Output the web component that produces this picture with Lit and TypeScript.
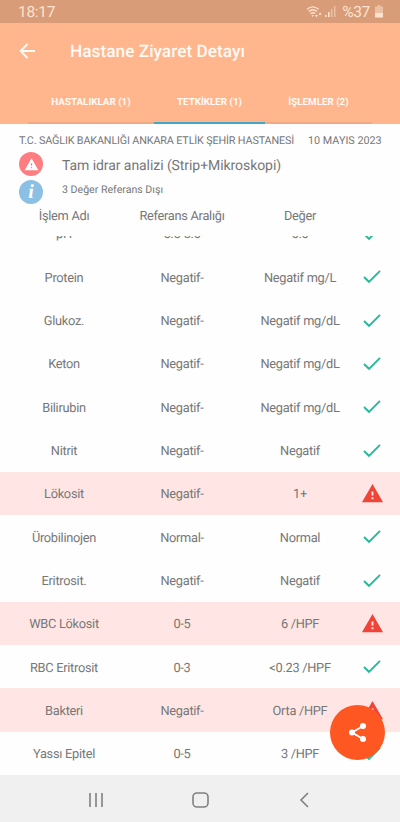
import {LitElement, html, css, svg} from 'lit';
import {customElement, property} from 'lit/decorators.js';
import {classMap} from 'lit/directives/class-map.js';

interface Result {
    name: string;
    range: string;
    value: string;
    alert?: boolean;
}

const RESULTS: Result[] = [
    {name: 'pH', range: '5.5-8.0', value: '6.0'},
    {name: 'Protein', range: 'Negatif-', value: 'Negatif mg/L'},
    {name: 'Glukoz.', range: 'Negatif-', value: 'Negatif mg/dL'},
    {name: 'Keton', range: 'Negatif-', value: 'Negatif mg/dL'},
    {name: 'Bilirubin', range: 'Negatif-', value: 'Negatif mg/dL'},
    {name: 'Nitrit', range: 'Negatif-', value: 'Negatif'},
    {name: 'Lökosit', range: 'Negatif-', value: '1+', alert: true},
    {name: 'Ürobilinojen', range: 'Normal-', value: 'Normal'},
    {name: 'Eritrosit.', range: 'Negatif-', value: 'Negatif'},
    {name: 'WBC Lökosit', range: '0-5', value: '6 /HPF', alert: true},
    {name: 'RBC Eritrosit', range: '0-3', value: '<0.23 /HPF'},
    {name: 'Bakteri', range: 'Negatif-', value: 'Orta /HPF', alert: true},
    {name: 'Yassı Epitel', range: '0-5', value: '3 /HPF'},
];

const warning = svg`<path fill-rule="evenodd" d="M1 21h22L12 2 1 21zm12-3h-2v-2h2v2zm0-4h-2v-4h2v4z"/>`;

@customElement('status-bar')
class StatusBar extends LitElement {
    static styles = css`
:host {
display: flex;
align-items: center;
height: 23px;
padding: 0 17px 0 18px;
background: #d89c78;
color: #ffe3d0;
font-size: 15.5px;
letter-spacing: -.3px;
}
.time {
flex: 1;
}
svg {
fill: currentColor;
}
.wifi {
margin-right: 2px;
}
.signal {
margin-right: 6px;
}
.battery {
margin-left: 5px;
}
`;

    render() {
	return html`
<span class="time">18:17</span>
<svg class="wifi" width="17" height="14" viewBox="0 0 17 14">
<g fill="none" stroke="currentColor" stroke-width="1.3">
<path d="M1 4.2Q6.8 -.6 12.6 4.2"/>
<path d="M2.8 6.5Q6.8 3 10.8 6.5"/>
<path d="M4.6 8.8Q6.8 6.8 9 8.8"/>
</g>
<path d="M5.4 10.2h2.6l-1.3 1.9zM9 10h3l-1.5 2.5zM12.6 9.7h3l-1.5-2.5z"/>
</svg>
<svg class="signal" width="11" height="13" viewBox="0 0 11 13">
<path d="M0 10h1.6v2H0zM3 7h1.6v5H3z"/>
<path opacity=".5" d="M6 4h1.5v8H6zM9 1h1.5v11H9z"/>
</svg>
<span>%37</span>
<svg class="battery" width="8" height="13" viewBox="0 0 8 13">
<path opacity=".5" d="M2.5 0h3v1.5H8V8H0V1.5h2.5z"/>
<path d="M0 8h8v4q0 .6-.6.6H.6Q0 12.600 0 12z"/>
</svg>`;
    }
}

@customElement('result-row')
class ResultRow extends LitElement {
    static styles = css`
.row {
display: grid;
grid-template-columns: repeat(3, 118px) 26px;
align-items: center;
height: 43.33px;
padding: 1px 0 0 5px;
box-sizing: border-box;
text-align: center;
}
.alert {
background: #ffe6e4;
}
span {
padding-top: 3px;
}
svg {
display: block;
margin: 0 auto;
}
.bad {
fill: #f04438;
}
.ok {
fill: none;
stroke: #26b99a;
stroke-width: 1.9;
}
`;

    @property({attribute: false}) result!: Result;

    render() {
	const {name, range, value, alert} = this.result;
	return html`
<div class=${classMap({row: true, alert: !!alert})}>
<span>${name}</span>
<span>${range}</span>
<span>${value}</span>
${alert
    ? html`<svg class="bad" width="23" height="23" viewBox="0 0 24 24">${warning}</svg>`
    : html`<svg class="ok" width="18" height="14" viewBox="0 0 18 14"><path d="M1 7 6 11.800 17 .800"/></svg>`}
</div>`;
    }
}

@customElement('app-root')
class AppRoot extends LitElement {
    static styles = css`
:host {
display: flex;
flex-direction: column;
position: relative;
height: 822px;
overflow: hidden;
background: #fefefe;
color: #777;
font: 12.8px/16px Roboto, sans-serif;
letter-spacing: -.28px;
text-rendering: geometricPrecision;
}
header {
flex: none;
height: 101px;
background: #ffb68d;
color: #fffaf5;
letter-spacing: 0;
}
.title {
display: flex;
align-items: center;
gap: 34px;
height: 56px;
padding-left: 19px;
font-size: 17.3px;
font-weight: 500;
}
.title span {
padding-top: 2px;
}
.tabs {
display: grid;
grid-template-columns: 126px 111px 107px;
height: 45px;
padding-left: 28px;
font-size: 9.8px;
font-weight: 700;
text-align: center;
}
.tab {
padding-top: 16px;
border-bottom: 2px solid #efaa84;
}
.tab.active {
border-color: #43a6c6;
}
.hospital {
display: flex;
gap: 14px;
padding: 9px 0 0 19px;
font-size: 10.8px;
letter-spacing: -.15px;
white-space: nowrap;
}
.date {
letter-spacing: 0;
}
.summary {
display: grid;
grid-template-columns: 24px 1fr;
column-gap: 19px;
row-gap: 4px;
align-items: center;
padding: 3px 0 0 19px;
letter-spacing: 0;
}
.badge {
display: flex;
align-items: center;
justify-content: center;
width: 24px;
height: 24px;
border-radius: 50%;
background: #ff7d80;
}
.badge svg {
fill: #fff;
}
.badge.info {
background: #8bbfe4;
color: #fff;
font: italic bold 20px/24px "Liberation Serif", serif;
}
.test {
padding-top: 4px;
font-size: 14px;
letter-spacing: -.07px;
}
.count {
font-size: 10.6px;
padding-bottom: 4px;
}
.head {
display: grid;
flex: none;
grid-template-columns: repeat(3, 118px);
padding: 5px 0 0 5px;
height: 32px;
box-sizing: border-box;
text-align: center;
}
.list {
display: flex;
flex: 1;
flex-direction: column;
justify-content: flex-end;
min-height: 0;
overflow: hidden;
}
.fab {
display: flex;
align-items: center;
justify-content: center;
position: absolute;
right: 15.500px;
bottom: 62px;
width: 55px;
height: 55px;
border-radius: 50%;
background: #ff5722;
}
nav {
display: flex;
flex: none;
justify-content: center;
gap: 88px;
height: 47px;
padding: 2px 0 0;
box-sizing: border-box;
align-items: center;
background: #f0f0f0;
}
nav svg {
fill: none;
stroke: #808080;
stroke-width: 1.6;
}
`;

    render() {
	return html`
<status-bar></status-bar>
<header>
<div class="title">
<svg width="17" height="16" viewBox="0 0 17 16" fill="none" stroke="#fffaf5" stroke-width="1.9"><path d="M16 8H2M8.500 1 1.600 8l6.900 7"/></svg>
<span>Hastane Ziyaret Detayı</span>
</div>
<div class="tabs">
<div class="tab">HASTALIKLAR (1)</div>
<div class="tab active">TETKİKLER (1)</div>
<div class="tab">İŞLEMLER (2)</div>
</div>
</header>
<div class="hospital">
<span>T.C. SAĞLIK BAKANLIĞI ANKARA ETLİK ŞEHİR HASTANESİ</span>
<span class="date">10 MAYIS 2023</span>
</div>
<div class="summary">
<div class="badge"><svg width="15" height="15" viewBox="0 0 24 24">${warning}</svg></div>
<span class="test">Tam idrar analizi (Strip+Mikroskopi)</span>
<div class="badge info">i</div>
<span class="count">3 Değer Referans Dışı</span>
</div>
<div class="head">
<span>İşlem Adı</span>
<span>Referans Aralığı</span>
<span>Değer</span>
</div>
<div class="list">
${RESULTS.map((r) => html`<result-row .result=${r}></result-row>`)}
</div>
<nav>
<svg width="16" height="16" viewBox="0 0 16 16"><path d="M2 1v14M8 1v14M14 1v14"/></svg>
<svg width="17" height="16" viewBox="0 0 17 16"><rect x="1" y="1" width="15" height="14" rx="4"/></svg>
<svg width="16" height="16" viewBox="0 0 16 16"><path d="M11 1 4 8l7 7"/></svg>
</nav>
<div class="fab">
<svg width="19" height="21" viewBox="0 0 19 21" fill="#fff">
<path fill="none" stroke="#fff" stroke-width="1.8" d="M15 4 4 10.500 15 17"/>
<circle cx="15" cy="4" r="3"/><circle cx="4" cy="10.500" r="3"/><circle cx="15" cy="17" r="3"/>
</svg>
</div>`;
    }
}
